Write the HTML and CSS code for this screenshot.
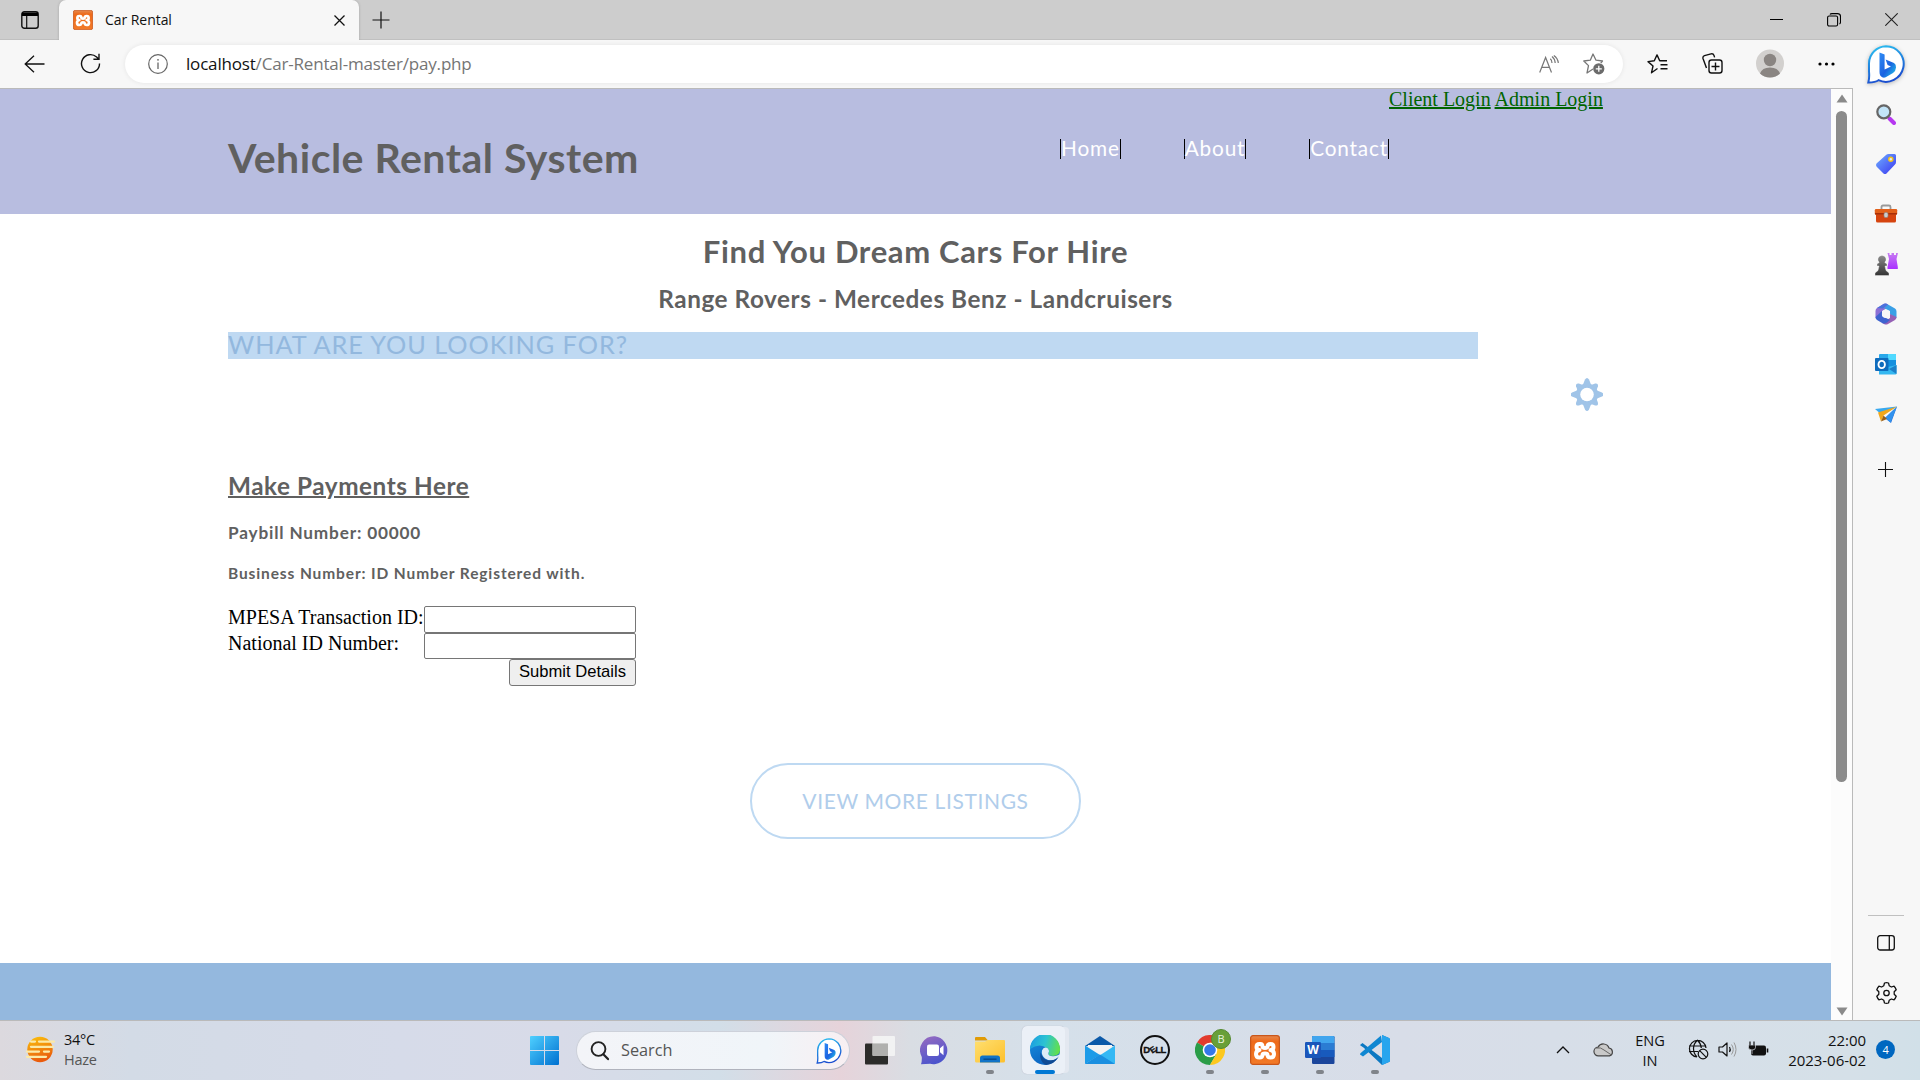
FILE: index.html
```
<!DOCTYPE html>
<html lang="en">
<head>
<meta charset="utf-8">
<title>Car Rental</title>
<link rel="stylesheet" href="styles.css">
</head>
<body>
<svg class="defs" aria-hidden="true">
  <defs>
    <linearGradient id="g-bing" x1="0" y1="0" x2="0.3" y2="1"><stop offset="0" stop-color="#2bc4f2"/><stop offset="1" stop-color="#1b4fd0"/></linearGradient>
    <linearGradient id="g-b" x1="0" y1="0" x2="1" y2="1"><stop offset="0" stop-color="#2f8cf5"/><stop offset=".55" stop-color="#1b62e0"/><stop offset="1" stop-color="#22cbe8"/></linearGradient>
    <linearGradient id="g-tag" x1="0" y1="0" x2="1" y2="1"><stop offset="0" stop-color="#6fb0ff"/><stop offset="1" stop-color="#3a35f0"/></linearGradient>
    <linearGradient id="g-purple" x1="0" y1="0" x2="0" y2="1"><stop offset="0" stop-color="#c77cf2"/><stop offset="1" stop-color="#a930ff"/></linearGradient>
    <linearGradient id="g-pawn" x1="0" y1="0" x2="0" y2="1"><stop offset="0" stop-color="#8c8c8c"/><stop offset="1" stop-color="#333"/></linearGradient>
    <linearGradient id="g-sun" x1="0" y1="0" x2="0.3" y2="1"><stop offset="0" stop-color="#fbc40d"/><stop offset="1" stop-color="#ea5b0c"/></linearGradient>
    <linearGradient id="g-win" x1="0" y1="0" x2="1" y2="1"><stop offset="0" stop-color="#4fd0ff"/><stop offset="1" stop-color="#0070d0"/></linearGradient>
    <linearGradient id="g-chat" x1="0" y1="0" x2="0.4" y2="1"><stop offset="0" stop-color="#9a6cc0"/><stop offset="1" stop-color="#4c54cc"/></linearGradient>
    <linearGradient id="g-folder" x1="0" y1="0" x2="1" y2="1"><stop offset="0" stop-color="#ffdf70"/><stop offset="1" stop-color="#fdc02c"/></linearGradient>
    <linearGradient id="g-edge" x1="0" y1="0.3" x2="1" y2="0.5"><stop offset="0" stop-color="#1b9de2"/><stop offset=".5" stop-color="#2cc3d2"/><stop offset="1" stop-color="#62e04c"/></linearGradient>
    <linearGradient id="g-edge2" x1="0" y1="0" x2="0.5" y2="1"><stop offset="0" stop-color="#1a93e0"/><stop offset="1" stop-color="#0b62c0"/></linearGradient>
    <linearGradient id="g-xampp" x1="0" y1="0" x2="0" y2="1"><stop offset="0" stop-color="#e58a50"/><stop offset=".2" stop-color="#ee6a1a"/><stop offset="1" stop-color="#f27a28"/></linearGradient>
    <symbol id="i-bing" viewBox="0 0 38 39">
      <path d="M19 1.2A17.8 17.8 0 1 1 11.500 35.200Q8 37.600 1.300 37.500Q2.600 33 2 26.500V18.200A17.500 17.500 0 0 1 19 1.200Z" fill="#fff" stroke="url(#g-bing)" stroke-width="2"/>
      <path d="M12.500 7.500L17.600 9.500V24.500L24 21.500L20.600 19.900L18.600 14.600L27 18Q29.200 19.300 29 22.500Q28.800 26 26 28L18.700 32.300Q15.800 33.500 13.400 30.800Q12.500 29.500 12.500 27Z" fill="url(#g-b)"/>
    </symbol>
    <symbol id="i-xampp" viewBox="0 0 30 30">
      <rect x=".6" y=".6" width="28.800" height="28.800" rx="2.500" fill="url(#g-xampp)" stroke="#c9561a" stroke-width="1.200"/>
      <path d="M10.500 9H9.500Q6.500 9 6.500 12Q6.500 15 9.500 15Q6 15.500 6 19Q6 22.500 9.500 22.500Q12.300 22.500 12.500 19.800Q12.600 18.500 15 18.500Q17.400 18.500 17.500 19.800Q17.700 22.500 20.500 22.500Q24 22.500 24 19Q24 15.500 20.500 15Q23.500 15 23.500 12Q23.500 9 20.500 9Q17.500 9 17.500 11.700Q17.400 13 15 13Q12.600 13 12.500 11.700Q12.500 9 10.500 9Z" fill="none" stroke="#fff" stroke-width="4" stroke-linejoin="round"/>
    </symbol>
  </defs>
</svg>

<header class="titlebar">
  <div class="tab-actions"><svg width="18" height="18" viewBox="0 0 18 18"><rect x=".8" y=".8" width="16.400" height="16.400" rx="2.500" fill="none" stroke="#111" stroke-width="1.400"/><path d="M1 1.500h16v3.500H1z" fill="#000"/><path d="M5.700 5v12" stroke="#111" stroke-width="1.200"/></svg></div>
  <div class="tab">
    <svg width="20" height="20"><use href="#i-xampp"/></svg>
    <span class="tab-title">Car Rental</span>
    <svg width="11" height="11" viewBox="0 0 11 11"><path d="M.5.5l10 10M10.500.5l-10 10" stroke="#111" stroke-width="1.300"/></svg>
  </div>
  <svg class="new-tab" width="18" height="18" viewBox="0 0 18 18"><path d="M9 .5v17M.5 9h17" stroke="#111" stroke-width="1.200"/></svg>
  <div class="window-controls">
    <svg width="13" height="13" viewBox="0 0 13 13"><path d="M0 6.500h13" stroke="#000"/></svg>
    <svg width="14" height="14" viewBox="0 0 14 14"><rect x=".6" y="3" width="10" height="10" rx="1.500" fill="none" stroke="#000" stroke-width="1.100"/><path d="M3 1.500Q3.500.6 5 .6h5.500a3 3 0 0 1 3 3V9Q13.400 10.500 12.500 11" fill="none" stroke="#000" stroke-width="1.100"/></svg>
    <svg width="13" height="13" viewBox="0 0 13 13"><path d="M.3.3l12.400 12.400M12.700.3L.3 12.700" stroke="#222" stroke-width="1.100"/></svg>
  </div>
</header>

<div class="browser">
  <div class="browser-main">
    <div class="toolbar">
      <svg class="back" width="21" height="18" viewBox="0 0 21 18"><path d="M10 .7L1.200 9l8.800 8.300M1.200 9H20.500" fill="none" stroke="#111" stroke-width="1.300"/></svg>
      <svg class="reload" width="21" height="21" viewBox="0 0 21 21"><path d="M19.500 10.500A9 9 0 1 1 16.600 4L19 6.300M19 .8v5.500h-5.600" fill="none" stroke="#111" stroke-width="1.400"/></svg>
      <div class="address">
        <svg width="20" height="20" viewBox="0 0 20 20"><circle cx="10" cy="10" r="9.300" fill="none" stroke="#666" stroke-width="1.200"/><path d="M10 8.500v6.500" stroke="#666" stroke-width="1.300"/><circle cx="10" cy="5.800" r=".9" fill="#666"/></svg>
        <span class="url"><b>localhost</b>/Car-Rental-master/pay.php</span>
        <svg class="aloud" width="20" height="18" viewBox="0 0 20 18"><path d="M.7 17.500L6.600 2.500L12.500 17.500M2.700 12.300h7.800M11.300 3.700Q13 5.200 13 8M13 1.500Q16 4 16.200 8M14.800.5Q18.900 3.300 19.300 8" fill="none" stroke="#777" stroke-width="1.200"/></svg>
        <svg class="star" width="22" height="22" viewBox="0 0 22 22"><path d="M10 16l-6 4 1.500-7.400L.8 8l6.500-.8L10 1l3 6.200 6.500.8-1.700 2" fill="none" stroke="#777" stroke-width="1.300" stroke-linejoin="round"/><circle cx="15.800" cy="15.800" r="5.600" fill="#6b6b6b"/><path d="M15.800 12.800v6M12.800 15.800h6" stroke="#fff" stroke-width="1.300"/></svg>
      </div>
      <div class="toolbar-actions">
        <svg width="21" height="20" viewBox="0 0 21 20"><path d="M10.500 14.500L4.500 18.800 6 12 1 7.600l6.300-.8L10 .9l2.700 5.900H20M13.500 10.800H20.500M13.500 14.800H20.500" fill="none" stroke="#111" stroke-width="1.400" stroke-linejoin="round"/></svg>
        <svg width="21" height="21" viewBox="0 0 21 21"><rect x="7" y="7" width="13" height="13" rx="2.500" fill="none" stroke="#111" stroke-width="1.400"/><path d="M13.500 9.500v8M9.500 13.500h8M4.500 15L1 5.500Q.5 3.500 2.500 2.700L9 .9q2.300-.5 3 1.500l.6 2" fill="none" stroke="#111" stroke-width="1.400"/></svg>
        <svg width="28" height="29" viewBox="0 0 28 28"><circle cx="14" cy="14" r="14" fill="#d2d0ce"/><circle cx="14" cy="10.500" r="6.200" fill="#8a8582"/><path d="M4 24Q6 18 14 18T24 24Q20 28 14 28T4 24Z" fill="#8a8582"/></svg>
        <svg width="17" height="4" viewBox="0 0 17 4"><g fill="#000"><circle cx="2" cy="2" r="1.600"/><circle cx="8.500" cy="2" r="1.600"/><circle cx="15" cy="2" r="1.600"/></g></svg>
      </div>
    </div>

    <div class="viewport">
      <div class="page">
        <header class="site-header">
          <h1>Vehicle Rental System</h1>
          <nav class="site-nav"><a>Home</a><a>About</a><a>Contact</a></nav>
          <div class="logins"><a>Client Login</a> <a>Admin Login</a></div>
        </header>
        <section class="intro">
          <h2>Find You Dream Cars For Hire</h2>
          <h3>Range Rovers - Mercedes Benz - Landcruisers</h3>
        </section>
        <div class="search-bar">WHAT ARE YOU LOOKING FOR?</div>
        <div class="options"><svg width="32" height="33" viewBox="-16 -16.500 32 33"><g fill="#a0c4e8"><circle r="11"/><path id="tooth" d="M-4-10L-2-15Q0-18 2-15L4-10V10L2 15Q0 18-2 15L-4 10Z"/><use href="#tooth" transform="rotate(45) scale(1 .9)"/><use href="#tooth" transform="rotate(90)"/><use href="#tooth" transform="rotate(135) scale(1 .9)"/></g><circle r="6.800" fill="#fff"/></svg></div>
        <section class="payment">
          <h3>Make Payments Here</h3>
          <h4>Paybill Number: 00000</h4>
          <h5>Business Number: ID Number Registered with.</h5>
          <form>
            <label>MPESA Transaction ID:</label><input type="text">
            <label class="second">National ID Number:</label><input class="second" type="text">
            <button type="button">Submit Details</button>
          </form>
        </section>
        <a class="more">VIEW MORE LISTINGS</a>
        <footer class="site-footer"></footer>
      </div>
      <div class="scrollbar">
        <svg width="12" height="9" viewBox="0 0 12 9"><path d="M6 .5L11.500 8.500H.5z" fill="#8b8b8b"/></svg>
        <div class="thumb"></div>
        <svg class="down" width="12" height="9" viewBox="0 0 12 9"><path d="M6 8.500L11.500.5H.5z" fill="#8b8b8b"/></svg>
      </div>
    </div>
  </div>

  <aside class="sidebar">
    <div class="side-item"><svg class="bing" width="38" height="39"><use href="#i-bing"/></svg></div>
    <div class="side-item"><svg width="20" height="21" viewBox="0 0 20 21"><path d="M13.500 14.500L18 19" stroke="#b637f0" stroke-width="4" stroke-linecap="round"/><circle cx="7.800" cy="7.800" r="6.500" fill="#c2e4f8" stroke="#666" stroke-width="2.200"/></svg></div>
    <div class="side-item"><svg width="22" height="22" viewBox="0 0 22 22"><path d="M11 2Q12 1 13.500 1H19.500Q21 1 21 2.500V9Q21 10.500 20 11.500L11.500 20.500Q10 21.500 8.500 20.500L1.500 13.500Q.5 12 1.500 10.500Z" fill="url(#g-tag)"/><circle cx="15.800" cy="6.200" r="2" fill="#dfe8ff" stroke="#f5c518" stroke-width="1.500"/></svg></div>
    <div class="side-item"><svg width="24" height="20" viewBox="0 0 24 20"><path d="M7.500 5V3Q7.500 1.500 9 1.500h6Q16.500 1.500 16.500 3V5" fill="none" stroke="#999" stroke-width="1.800"/><rect x="2" y="9" width="20" height="9.500" rx="1.500" fill="#d6440f"/><rect x=".8" y="5" width="22.400" height="5.500" rx="1.200" fill="#e2601a"/><path d="M1 9h22v1.600H1z" fill="#a92f08"/><rect x="10" y="8.500" width="4" height="5" rx="1.500" fill="#ccc" stroke="#888" stroke-width=".6"/></svg></div>
    <div class="side-item"><svg width="24" height="24" viewBox="0 0 24 24"><path d="M13.500 1h2v2h2V1h2.500v2h2V1H24l-1.500 6 1.300 8v2H13.500v-2L15 7z" fill="url(#g-purple)"/><path d="M8 3.500a4 4 0 0 1 2.800 7L13 12v2h-2l1 4.500 3 2.500v2.500H1V21l3-2.500L5 14H3v-2l2.200-1.500A4 4 0 0 1 8 3.500Z" fill="url(#g-pawn)" stroke="#f7f7f7" stroke-width=".4"/></svg></div>
    <div class="side-item"><svg width="22" height="22" viewBox="0 0 22 22"><path d="M9 .8L2 5Q.5 6 .5 8v7l6.500-3V8L13 4.500V1.500Q11 0 9 .8Z" fill="#8c6fd4"/><path d="M13 1.500L20 5.500Q21.500 6.500 21.500 8.500V15L15 11.500V8L9 5Z" fill="#3a9fe6"/><path d="M15 11l6.500 3Q21.500 16 20 17l-7 4q-2 1-4 0l-2-1.200L15 15z" fill="#9560b5"/><path d="M.5 14Q.5 16 2 17l5.500 3.300Q10 21 12 19.500L15 17 7 13V8Z" fill="#3e63cf"/><path d="M2 5L9 .8Q11 0 13 1.500L8 5.500Z" fill="#4a72dc"/><circle cx="11" cy="11" r="4.100" fill="#f7f7f7"/></svg></div>
    <div class="side-item"><svg width="22" height="21" viewBox="0 0 22 21"><rect x="4" width="17" height="12" rx="1" fill="#28a8ea"/><path d="M13 0h7q1 0 1 1v10h-8z" fill="#50d9ff"/><path d="M13 6h8v5l-8 4z" fill="#1490df"/><path d="M4 20.500V15L21.500 11v8.500q0 1-1 1z" fill="#35b8f1"/><path d="M14 15l7.500-4v9z" fill="#1b7fc8"/><rect y="4" width="13.500" height="13" rx="1" fill="#0f6cbd"/><ellipse cx="6.700" cy="10.500" rx="3.200" ry="3.600" fill="none" stroke="#fff" stroke-width="1.900"/></svg></div>
    <div class="side-item"><svg width="22" height="18" viewBox="0 0 22 18"><path d="M0 3L22 .5 7 9z" fill="#39a9ef"/><path d="M22 .5L16 17l-6-5z" fill="#2370d8"/><path d="M22 .5L10 12l5.500 4.500z" fill="#3292ee"/><path d="M3 6.500L22 .5 8.500 9.500 6 15.500z" fill="#f2a71b"/><path d="M6 15.500l2.500-6L12 13z" fill="#9a5f18"/></svg></div>
    <div class="side-item add"><svg width="16" height="16" viewBox="0 0 16 16"><path d="M7.500 0v15M0 7.500h15" stroke="#111" stroke-width="1.100"/></svg></div>
    <div class="side-bottom">
      <div class="side-item"><svg width="18" height="16" viewBox="0 0 18 16"><rect x=".7" y=".7" width="16.600" height="14.300" rx="2.500" fill="none" stroke="#111" stroke-width="1.300"/><path d="M12.300 1v14" stroke="#111" stroke-width="1.300"/></svg></div>
      <div class="side-item"><svg width="21" height="22" viewBox="-10.500 -11 21 22"><path d="M-2-10Q0-10.600 2-10L2.700-7.300 4.900-6 7.600-6.800Q9-5.400 9.700-3.300L7.700-1.300V1.300L9.700 3.300Q9 5.400 7.600 6.800L4.900 6 2.700 7.300 2 10Q0 10.600-2 10L-2.700 7.300-4.900 6-7.600 6.800Q-9 5.400-9.700 3.300L-7.700 1.300V-1.300L-9.700-3.300Q-9-5.400-7.600-6.800L-4.900-6-2.700-7.300Z" fill="none" stroke="#111" stroke-width="1.300" stroke-linejoin="round"/><circle r="2.700" fill="none" stroke="#111" stroke-width="1.300"/></svg></div>
    </div>
  </aside>
</div>

<footer class="taskbar">
  <div class="weather">
    <svg width="31" height="27" viewBox="0 0 31 27"><circle cx="15" cy="13.500" r="12.700" fill="url(#g-sun)"/><g stroke="#fbe9a8" stroke-width="2.300" stroke-linecap="round"><path d="M6 5.600h4M14 5.600h15M6 10.800h22M2 15.600h12M19 15.600h5M2 20.800h19"/></g></svg>
    <div class="weather-text"><span>34°C</span><span class="muted">Haze</span></div>
  </div>
  <svg class="start" width="29" height="29" viewBox="0 0 29 29"><path d="M1 0h13v14H0V1Q0 0 1 0ZM15 0h13q1 0 1 1v13H15zM0 15h14v14H1Q0 29 0 28zM15 15h14v13q0 1-1 1H15z" fill="url(#g-win)"/></svg>
  <div class="search">
    <svg width="20" height="20" viewBox="0 0 20 20"><circle cx="8.500" cy="8" r="6.900" fill="none" stroke="#222" stroke-width="1.900"/><path d="M13.300 13.200l4.700 4.900" stroke="#222" stroke-width="2.200" stroke-linecap="round"/></svg>
    <span>Search</span>
    <svg class="search-bing" width="26" height="26"><use href="#i-bing"/></svg>
  </div>
  <div class="apps">
    <div class="app"><svg width="30" height="29" viewBox="0 0 30 29"><rect y="7.500" width="23" height="21" rx="1" fill="#2c2c2a"/><rect x="7.500" width="22.500" height="20" rx="1" fill="#f5f5f5" fill-opacity=".88"/><path d="M7.500 7.500H23V20H8.500q-1 0-1-1z" fill="#b0b0ae"/></svg></div>
    <div class="app"><svg width="30" height="29" viewBox="0 0 30 29"><path d="M15 .3A14 14 0 1 1 10 27.800L1 28.300Q2 26 1.800 21A14 14 0 0 1 15 .3Z" fill="url(#g-chat)"/><rect x="7" y="8.500" width="12" height="11.500" rx="2" fill="#fff"/><path d="M20 12.300l3.500-3v10l-3.500-3z" fill="#fff"/></svg></div>
    <div class="app open"><svg width="30" height="28" viewBox="0 0 30 28"><path d="M0 2Q0 1 1 1h9l3 3.500H0z" fill="#e09b06"/><path d="M0 5.500h10L13 4h16q1 0 1 1v20q0 1.500-1.500 1.500h-27Q0 26.500 0 25z" fill="url(#g-folder)"/><path d="M5 26.500V22q0-2.500 2.500-2.500h15Q25 19.500 25 22v4.500z" fill="#1173c7"/><path d="M8.500 23.200h13" stroke="#084b90" stroke-width="1.500"/></svg></div>
    <div class="app active"><svg width="30" height="30" viewBox="0 0 30 30"><circle cx="15" cy="15" r="15" fill="url(#g-edge2)"/><path d="M0 14A15 15 0 0 1 30 14Q30.500 20 23 21 18 21 18.300 18.500 20 16 17 13 9 7.500 0 14Z" fill="url(#g-edge)"/><path d="M12 15.500Q14 10.500 18 13.500 20 16 18.300 18.500 18 21 23 21.300 28 21 29.300 19 29.500 22 27 23.500 21 27.500 15 23.500 11 20 12 15.500Z" fill="#dcebf7"/><path d="M10.500 17Q12 24 18 25.500 24 26 28.500 22 24 29.500 16 30 9 27 10.500 17Z" fill="#104b94"/></svg></div>
    <div class="app"><svg width="30" height="28" viewBox="0 0 30 28"><path d="M0 10L15 0 30 10z" fill="#0b59a8"/><path d="M3 9h24v8l-12 5L3 17z" fill="#f3f3f3"/><path d="M0 9.500L15 19 0 28z" fill="#1c9be8"/><path d="M30 9.500L10 22.500 0 28h29q1 0 1-1z" fill="#34b8f4"/><path d="M0 28L15 18.500 30 28z" fill="#1a8fe0"/></svg></div>
    <div class="app"><div class="dell">D<i>E</i>LL</div></div>
    <div class="app open"><svg width="30" height="30" viewBox="0 0 30 30"><path d="M15 15L2 7.500A15 15 0 0 1 28 7.500z" fill="#e23b2e"/><path d="M15 15L2 7.500A15 15 0 0 0 15 30l6.500-11z" fill="#2a9d48"/><path d="M21.500 18.700L15 30A15 15 0 0 0 28 7.500H15z" fill="#fcc81e"/><circle cx="15" cy="15" r="7.300" fill="#fff"/><circle cx="15" cy="15" r="5.800" fill="#3478e8"/></svg><span class="profile">B</span></div>
    <div class="app open"><svg width="30" height="30"><use href="#i-xampp"/></svg></div>
    <div class="app open"><svg width="30" height="28" viewBox="0 0 30 28"><rect x="7" width="22.500" height="28" rx="1.200" fill="#1b469c"/><path d="M8.200 0h20q1.200 0 1.200 1.200V7H7V1.200Q7 0 8.200 0Z" fill="#41a5ee"/><path d="M7 7h22.500v7H7z" fill="#2b7cd3"/><path d="M7 14h22.500v7H7z" fill="#185abd"/><rect y="6" width="16" height="16" rx="1.200" fill="#1a56ba"/><text x="8" y="18.300" text-anchor="middle" class="word-letter">W</text></svg></div>
    <div class="app open"><svg width="30" height="30" viewBox="0 0 30 30"><path d="M22 0L29 3q1 .5 1 1.500v21q0 1-1 1.500l-7 3L3.500 12.500Q0 10 0 10L2.500 8 22 23z" fill="#0b78c2"/><path d="M22 7L3 21.500 0 19.500Q0 18.500 1 17.700L21 .5z" fill="#0f87d2"/><path d="M22 0L29 3q1 .5 1 1.500v21q0 1-1 1.500l-7 3z" fill="#27a5ee"/></svg></div>
  </div>
  <div class="tray">
    <div class="tray-item wide"><svg width="14" height="8" viewBox="0 0 14 8"><path d="M1 7l6-6 6 6" fill="none" stroke="#111" stroke-width="1.300"/></svg></div>
    <div class="tray-item wide"><svg width="21" height="15" viewBox="0 0 21 15"><path d="M5.500 13.800A4.300 4.300 0 0 1 5 5.200 6 6 0 0 1 16 6a4 4 0 0 1 .5 7.800Z" fill="#c9c9c9" stroke="#444" stroke-width="1.200"/><path d="M3 6Q8 5 11 8L18.500 13" fill="none" stroke="#666" stroke-width="1"/></svg></div>
    <div class="lang"><span>ENG</span><span>IN</span></div>
    <div class="tray-item globe"><svg width="21" height="21" viewBox="0 0 21 21"><g fill="none" stroke="#111" stroke-width="1.200"><path d="M9 18A8.300 8.300 0 1 1 18 9M1 7h16M1 12.500h9M9 18Q5.500 14.500 5.500 9.500T9.500 1.200Q13 4.500 13.300 9"/><circle cx="15" cy="15" r="4.800"/><path d="M11.700 11.700l6.600 6.600"/></g></svg></div>
    <div class="tray-item"><svg width="19" height="17" viewBox="0 0 19 17"><path d="M1 6h3.500L9 2v13L4.500 11H1z" fill="none" stroke="#111" stroke-width="1.200" stroke-linejoin="round"/><path d="M11.500 6Q13 8.500 11.500 11" fill="none" stroke="#111" stroke-width="1.200"/><path d="M13.500 3.500Q17 8.500 13.500 13.500M16 1.500Q20 8.500 16 15.500" fill="none" stroke="#999" stroke-width="1"/></svg></div>
    <div class="tray-item battery"><svg width="21" height="17" viewBox="0 0 21 17"><rect x="3" y="4.500" width="15" height="10" rx="2" fill="#111"/><path d="M19.500 7.500v4" stroke="#111" stroke-width="1.600"/><path d="M2 1v3M6 1v3M.5 4h7v2.500Q7.500 9 4 9T.5 6.500zM4 9v4" fill="#111" stroke="#dbe0e8" stroke-width=".7"/><path d="M2 .5v4M6 .5v4" stroke="#111" stroke-width="1.200"/></svg></div>
    <div class="clock"><span>22:00</span><span>2023-06-02</span></div>
    <div class="count">4</div>
  </div>
</footer>
</body>
</html>
```
FILE: styles.css
```
* { box-sizing: border-box; }
body { margin: 0; width: 1920px; height: 1080px; overflow: hidden; display: flex; flex-direction: column; font-family: "Open Sans", "Noto Sans", sans-serif; color: #111; background: #f7f7f7; }
svg { display: block; flex: none; }
h1, h2, h3, h4, h5 { margin: 0; }
.defs { position: absolute; width: 0; height: 0; }

/* Title bar */
.titlebar { height: 40px; flex: none; display: flex; align-items: center; background: #cdcdcd; border-bottom: 1px solid #c0c0c0; }
.tab-actions { width: 59px; padding-left: 21px; }
.tab { width: 300px; height: 40px; align-self: flex-start; padding: 0 14px; display: flex; align-items: center; background: #f7f7f7; border-radius: 7px 7px 0 0; box-shadow: 0 0 3px rgba(0, 0, 0, .2); clip-path: inset(0 -4px 0 -4px); }
.tab-title { flex: 1; margin-left: 12px; padding-bottom: 1px; font-size: 14px; letter-spacing: -.05px; }
.new-tab { margin-left: 13px; }
.window-controls { margin-left: auto; padding-right: 22px; display: flex; align-items: center; gap: 44px; }

/* Browser area */
.browser { flex: 1; min-height: 0; display: flex; }
.browser-main { width: 1853px; display: flex; flex-direction: column; }
.toolbar { height: 48px; flex: none; padding-bottom: 1px; display: flex; align-items: center; }
.back { margin-left: 24px; }
.reload { margin-left: 35px; }
.address { width: 1498px; height: 38px; margin-left: 24px; padding: 0 18px 0 23px; display: flex; align-items: center; background: #fff; border-radius: 19px; box-shadow: 0 0 5px rgba(0, 0, 0, .08); }
.url { margin-left: 18px; padding-bottom: 1px; font-size: 17px; letter-spacing: -.18px; color: #757575; }
.url b { font-weight: 400; color: #111; }
.aloud { margin-left: auto; }
.star { margin-left: 24px; }
.toolbar-actions { margin-left: 24px; display: flex; align-items: center; gap: 34px; }
.toolbar-actions svg:nth-child(3) { margin-left: -1px; }
.viewport { flex: 1; min-height: 0; display: flex; border: 1px solid #bababa; border-left: 0; }

/* Web page */
.page { width: 1831px; display: flex; flex-direction: column; background: #fff; font: 20px "Liberation Serif", serif; color: #000; }
.site-header { height: 125px; flex: none; padding: 0 228px; display: flex; align-items: flex-start; background: #b8bde0; }
.page h1, .page h2, .page h3, .page h4, .page h5 { font-family: Lato, sans-serif; font-weight: 700; color: #606060; white-space: nowrap; }
.page h1 { margin-top: 45px; font-size: 41px; line-height: 48px; letter-spacing: .5px; }
.site-nav { margin: 50px 0 0 auto; display: flex; gap: 63px; font-family: Lato, sans-serif; font-size: 20.8px; line-height: 18px; letter-spacing: .8px; color: #fff; }
.site-nav a { height: 20px; border: solid #000; border-width: 0 1px; }
.logins { width: 214px; line-height: 20px; white-space: nowrap; color: #006400; }
.logins a { text-decoration: underline; text-decoration-thickness: 2px; }
.intro { height: 118px; flex: none; padding-top: 19px; text-align: center; }
.page h2 { font-size: 31px; line-height: 36px; letter-spacing: .66px; }
.page h3 { font-size: 24.3px; line-height: 28px; letter-spacing: .56px; }
.intro h3 { margin-top: 16px; }
.search-bar { width: 1250px; height: 27px; flex: none; margin-left: 228px; background: #bfd9f2; font: 25.3px/25px Lato, sans-serif; letter-spacing: .95px; color: #93b8de; }
.options { margin: 19px 228px 0 0; align-self: flex-end; }
.payment { margin: 61px 0 0 228px; }
.payment h3 { text-decoration: underline; text-decoration-thickness: 2px; }
.page h4 { margin-top: 23px; font-size: 17.2px; line-height: 20px; letter-spacing: .83px; }
.page h5 { margin-top: 20px; font-size: 15.5px; line-height: 20px; letter-spacing: .88px; }
form { width: 408px; margin-top: 23px; display: grid; grid-template-columns: 196px 212px; grid-template-rows: 27px 26px 27px; }
label { line-height: 23px; white-space: nowrap; }
label.second { line-height: 21px; }
input { width: 212px; height: 27px; border: 1px solid #767676; border-radius: 2px; background: #fff; }
input.second { height: 26px; }
form button { grid-column: 2; justify-self: end; width: 127px; height: 27px; padding: 0 0 2px; border: 1px solid #767676; border-radius: 3px; background: #efefef; font: 16.6px/23px "Liberation Sans", sans-serif; color: #000; }
.more { width: 331px; height: 76px; flex: none; margin: 77px auto 0; border: 2px solid #bed9f2; border-radius: 38px; text-align: center; font: 21px/71px Lato, sans-serif; letter-spacing: .62px; color: #b0cdeb; }
.site-footer { height: 57px; flex: none; margin-top: auto; background: #94b8de; }

.scrollbar { flex: 1; padding: 5px 0 4px; display: flex; flex-direction: column; align-items: center; background: #fcfcfc; }
.thumb { width: 11px; height: 671px; margin-top: 8px; border-radius: 6px; background: #8b8b8b; }
.scrollbar .down { margin-top: auto; }

/* Edge sidebar */
.sidebar { flex: 1; padding-right: 1px; display: flex; flex-direction: column; border-bottom: 1px solid #bababa; }
.side-item { height: 50.1px; flex: none; display: flex; align-items: center; justify-content: center; }
.side-item:first-child { height: 49px; }
.bing { filter: drop-shadow(0 1px 2px rgba(0, 0, 0, .25)); }
.add { margin-top: 5px; }
.side-bottom { margin: auto 15px 2px; padding-top: 3px; border-top: 1px solid #c0c0c0; }

/* Taskbar */
.taskbar { height: 59px; flex: none; display: flex; align-items: center; background: linear-gradient(90deg, #dcd9de 0, #d3dbe6 130px, #d6dbe9 400px, #d8dbe8 560px, #d2dee8 720px, #e6d3da 840px, #d9dde3 910px, #d5e0ea 1050px, #d8dde8 1400px, #d5e0e8 1850px, #d1e0e8 1920px); }
.weather { width: 530px; padding: 0 0 2px 25px; display: flex; align-items: center; gap: 8px; }
.weather-text { display: flex; flex-direction: column; font-size: 14.5px; line-height: 20px; letter-spacing: -.3px; }
.muted { color: #555; }
.search { width: 274px; height: 39px; margin: 0 2px 0 17px; padding: 0 7px 0 13px; display: flex; align-items: center; border: 1px solid #cdd1da; border-bottom-color: #b0b3bd; border-radius: 20px; background: linear-gradient(90deg, #f3f4f8, #f0f5f9 70%, #f8eff2); font-size: 16.3px; color: #555; }
.search span { margin-left: 11px; padding-bottom: 1px; }
.search-bing { margin-left: auto; }
.apps { display: flex; }
.app { position: relative; width: 55px; height: 59px; padding-bottom: 1px; display: flex; align-items: center; justify-content: center; }
.app.open::after, .app.active::after { content: ""; position: absolute; bottom: 6px; left: 50%; width: 8px; height: 4px; margin-left: -4px; border-radius: 2px; background: #80848a; }
.app.active::after { width: 20px; margin-left: -10px; background: #0078d4; }
.app.active::before { content: ""; position: absolute; left: 5px; top: 5px; width: 43px; height: 48px; border-radius: 5px; background: #ebf0f7; box-shadow: 5px 0 0 -1px #e3e8f0, 0 0 1px #aab; }
.app.active svg { position: relative; }
.dell { width: 30px; height: 30px; border: 2px solid #111; border-radius: 50%; text-align: center; font: 900 9.5px/26px "Liberation Sans", sans-serif; letter-spacing: -.6px; -webkit-text-stroke: .3px #111; }
.dell i { display: inline-block; transform: rotate(-35deg) scale(.9); font-style: normal; }
.profile { position: absolute; left: 29px; top: 8px; width: 20px; height: 20px; border: 1px solid #558a30; border-radius: 50%; background: #689f38; color: #e8f3dc; text-align: center; font-size: 11px; line-height: 18px; }
.word-letter { font: 700 12px "Open Sans", sans-serif; fill: #fff; }
.tray { margin-left: auto; padding: 0 25px 2px 0; display: flex; align-items: center; font-size: 15px; line-height: 20px; letter-spacing: -.05px; }
.tray-item { width: 29px; display: flex; justify-content: center; }
.tray-item.wide { width: 40px; }
.tray-item.globe { width: 30px; margin-left: 6px; }
.tray-item.battery { width: 32px; }
.lang, .clock { display: flex; flex-direction: column; }
.lang { width: 54px; align-items: center; font-size: 14.6px; }
.clock { width: 92px; align-items: flex-end; }
.count { width: 19px; height: 19px; margin-left: 10px; border-radius: 50%; background: #0067c0; color: #fff; text-align: center; font-size: 11px; line-height: 19px; }
```
